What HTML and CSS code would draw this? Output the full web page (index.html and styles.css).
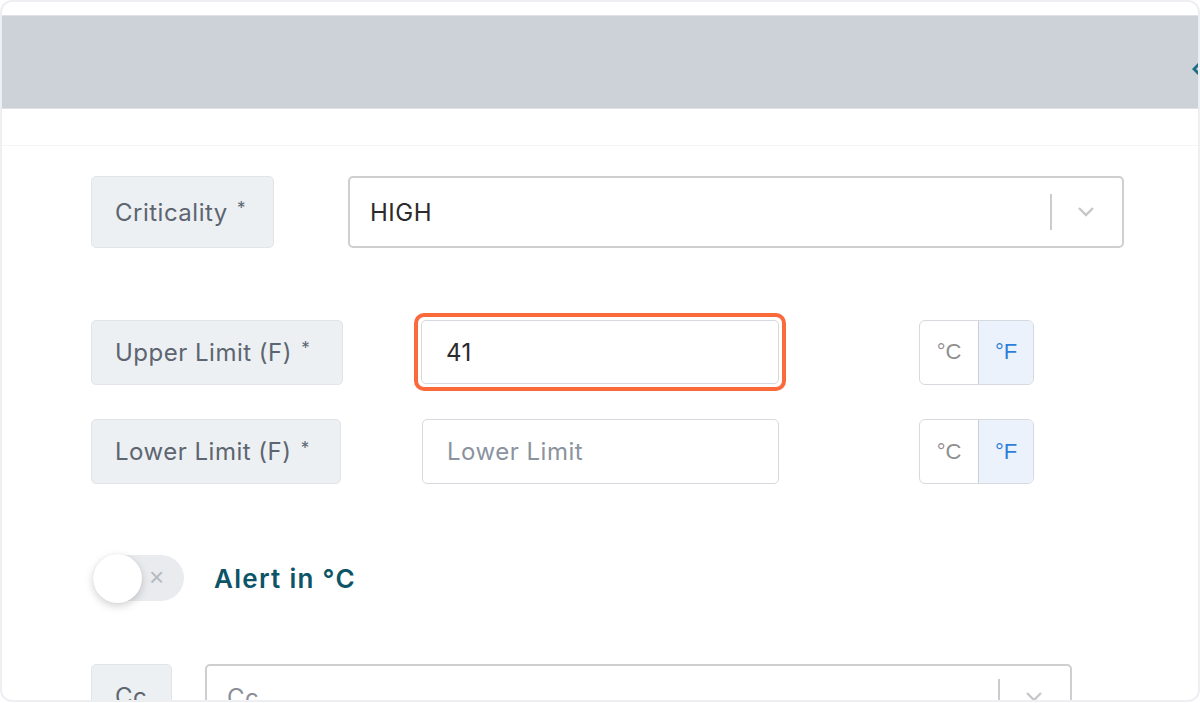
FILE: index.html
```html
<!DOCTYPE html>
<html>
<head>
<meta charset="utf-8">
<link rel="stylesheet" href="styles.css">
</head>
<body>
<div class="frame">
  <div class="header-band">
    <svg class="back-icon" width="10" height="14" viewBox="0 0 10 14"><path d="M8 1 L2 7 L8 13" fill="none" stroke="#1b6f85" stroke-width="3"/></svg>
  </div>
  <div class="header-gap"></div>
  <div class="form">
    <div class="row row-crit">
      <div class="label label-crit">Criticality&nbsp;<span class="req">*</span></div>
      <div class="select select-crit">
        <span class="select-value">HIGH</span>
        <span class="select-sep"></span>
        <svg class="chev" width="20" height="12" viewBox="0 0 20 12"><path d="M3 2 L10 9 L17 2" fill="none" stroke="#c7c7c7" stroke-width="2.4"/></svg>
      </div>
    </div>
    <div class="row row-upper">
      <div class="label label-upper">Upper Limit (F)&nbsp;<span class="req">*</span></div>
      <div class="highlight">
        <div class="input input-hl"><span class="value">41</span></div>
      </div>
      <div class="unit"><span class="u-c">°C</span><span class="u-f">°F</span></div>
    </div>
    <div class="row row-lower">
      <div class="label label-lower">Lower Limit (F)&nbsp;<span class="req">*</span></div>
      <div class="input input-lower"><span class="placeholder">Lower Limit</span></div>
      <div class="unit"><span class="u-c">°C</span><span class="u-f">°F</span></div>
    </div>
    <div class="row row-switch">
      <div class="switch">
        <span class="knob"></span>
        <span class="x">×</span>
      </div>
      <span class="switch-label">Alert in °C</span>
    </div>
    <div class="row row-cc">
      <div class="label label-cc">Cc</div>
      <div class="select select-cc">
        <span class="select-ph">Cc</span>
        <span class="select-sep"></span>
        <svg class="chev" width="20" height="12" viewBox="0 0 20 12"><path d="M3 2 L10 9 L17 2" fill="none" stroke="#c7c7c7" stroke-width="2.4"/></svg>
      </div>
    </div>
  </div>
</div>
</body>
</html>
```

FILE: styles.css
```css
html, body {
  margin: 0;
  padding: 0;
  background: #ffffff;
  width: 1200px;
  height: 703px;
  overflow: hidden;
  font-family: Inter, "Liberation Sans", sans-serif;
}

.frame {
  position: relative;
  margin: 0;
  width: 1200px;
  height: 702px;
  box-sizing: border-box;
  border: 2px solid #eeeff3;
  border-radius: 12px;
  background: #fff;
  overflow: hidden;
  padding-top: 13px;
}

.header-band {
  position: relative;
  height: 92px;
  background: #cdd1d8;
  border-top: 1px solid #dfe2e6;
  border-bottom: 1px solid #dfe2e6;
}

.back-icon {
  position: absolute;
  right: -4px;
  top: 46px;
}

.header-gap {
  height: 36px;
  border-bottom: 1px solid #f4f4f7;
}

.form {
  padding-left: 89px;
  padding-top: 30px;
}

.row {
  display: flex;
  align-items: center;
}

.label {
  box-sizing: border-box;
  background: #edf0f3;
  border: 1px solid #e1e4e8;
  border-radius: 5px;
  color: #5c6570;
  font-size: 24px;
  letter-spacing: 0.5px;
  padding-left: 23px;
  display: flex;
  align-items: center;
  white-space: nowrap;
}

.req {
  font-size: 17px;
  position: relative;
  top: -4px;
  margin-left: 2px;
}

.label-crit { width: 183px; height: 72px; }
.label-upper { width: 252px; height: 65px; }
.label-lower { width: 250px; height: 65px; }
.label-cc { width: 81px; height: 65px; }

.select {
  box-sizing: border-box;
  border: 2px solid #cfcfcf;
  border-radius: 5px;
  display: flex;
  align-items: center;
  background: #fff;
}

.select-crit {
  margin-left: 74px;
  width: 776px;
  height: 72px;
  padding-left: 20px;
}

.select-value {
  flex: 1;
  font-size: 24px;
  letter-spacing: 0.5px;
  color: #2b2b2b;
}

.select-ph {
  flex: 1;
  font-size: 24px;
  letter-spacing: 0.5px;
  color: #8a8f96;
}

.select-sep {
  width: 2px;
  height: 36px;
  background: #cccccc;
  margin-right: 24px;
}

.chev {
  margin-right: 26px;
}

.row-upper { margin-top: 65px; }

.highlight {
  margin-left: 71px;
  box-sizing: border-box;
  border: 4px solid #fb6a3b;
  border-radius: 10px;
  padding: 3px;
  width: 372px;
  height: 78px;
}

.input {
  box-sizing: border-box;
  border: 1px solid #d6d9de;
  border-radius: 5px;
  background: #fff;
  display: flex;
  align-items: center;
  padding-left: 24px;
  font-size: 24px;
  letter-spacing: 0.5px;
}

.input-hl {
  width: 100%;
  height: 100%;
}

.value { color: #2b2b2b; }

.input-lower {
  margin-left: 81px;
  width: 357px;
  height: 65px;
}

.placeholder { color: #8a939e; }

.unit {
  box-sizing: border-box;
  display: flex;
  border: 1px solid #d6d9de;
  border-radius: 6px;
  overflow: hidden;
  height: 65px;
  width: 115px;
  font-size: 22px;
  font-family: "Liberation Sans", sans-serif;
}

.row-upper .unit { margin-left: 133px; }
.row-lower .unit { margin-left: 140px; }

.u-c {
  width: 58px;
  display: flex;
  align-items: center;
  justify-content: center;
  color: #8f8f8f;
  border-right: 1px solid #c9ced6;
}

.u-f {
  flex: 1;
  display: flex;
  align-items: center;
  justify-content: center;
  color: #2f7fd9;
  background: #ebf2fb;
}

.row-lower { margin-top: 28px; }

.row-switch { margin-top: 71px; }

.switch {
  position: relative;
  width: 91px;
  height: 46px;
  border-radius: 23px;
  background: #e9ebef;
  margin-left: 2px;
}

.knob {
  position: absolute;
  left: 0;
  top: -1px;
  width: 49px;
  height: 49px;
  border-radius: 50%;
  background: #fff;
  box-shadow: 0 3px 8px rgba(0,0,0,0.18), 0 0 1px rgba(0,0,0,0.1);
}

.x {
  position: absolute;
  left: 56px;
  top: 7px;
  font-size: 26px;
  color: #b6bac1;
  font-family: "Liberation Sans", sans-serif;
}

.switch-label {
  margin-left: 30px;
  font-size: 26px;
  letter-spacing: 1.3px;
  font-weight: 600;
  color: #0c5466;
}

.row-cc {
  margin-top: 63px;
  align-items: flex-start;
}

.select-cc {
  margin-left: 33px;
  width: 867px;
  height: 66px;
  padding-left: 20px;
}
```
